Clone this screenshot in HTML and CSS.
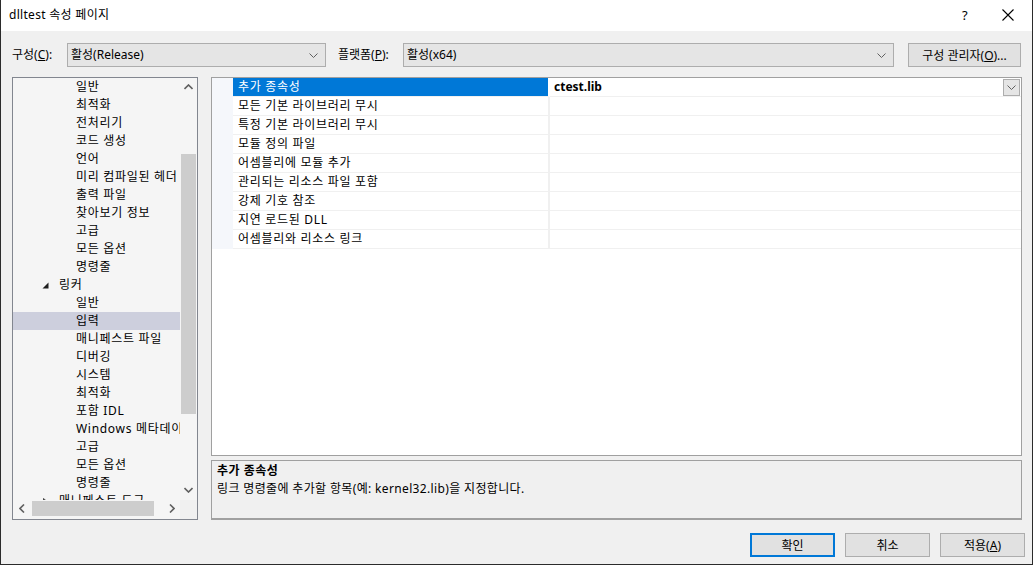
FILE: index.html
```html
<!DOCTYPE html>
<html lang="ko">

<head>
    <meta charset="UTF-8">
    <title>dlltest 속성 페이지</title>
    <link rel="stylesheet" href="styles.css">
</head>

<body>
    <div class="window">
        <div class="titlebar">
            <span class="title">dlltest 속성 페이지</span>
            <span class="help">?</span>
            <span class="close">
                <svg width="12" height="12" viewBox="0 0 12 12">
                    <path d="M0.5 0.5 L11.5 11.5 M11.5 0.5 L0.5 11.5" stroke="#000" stroke-width="1.1" fill="none" />
                </svg>
            </span>
        </div>

        <div class="content">
            <div class="toolbar">
                <span class="label label-config">구성(<u>C</u>):</span>
                <div class="combo combo-config">
                    <span>활성(Release)</span>
                    <svg class="chevron" width="9" height="5" viewBox="0 0 9 5"><path d="M0.5 0.5 L4.5 4.5 L8.5 0.5" stroke="#606060" fill="none" /></svg>
                </div>
                <span class="label label-platform">플랫폼(<u>P</u>):</span>
                <div class="combo combo-platform">
                    <span>활성(x64)</span>
                    <svg class="chevron" width="9" height="5" viewBox="0 0 9 5"><path d="M0.5 0.5 L4.5 4.5 L8.5 0.5" stroke="#606060" fill="none" /></svg>
                </div>
                <button class="btn btn-manager">구성 관리자(<u>O</u>)...</button>
            </div>

            <div class="main">
                <div class="tree">
                    <div class="tree-items">
                        <div class="node child">일반</div>
                        <div class="node child">최적화</div>
                        <div class="node child">전처리기</div>
                        <div class="node child">코드 생성</div>
                        <div class="node child">언어</div>
                        <div class="node child">미리 컴파일된 헤더</div>
                        <div class="node child">출력 파일</div>
                        <div class="node child">찾아보기 정보</div>
                        <div class="node child">고급</div>
                        <div class="node child">모든 옵션</div>
                        <div class="node child">명령줄</div>
                        <div class="node parent">
                            <svg class="expander" width="7" height="7" viewBox="0 0 7 7"><path d="M6.5 0.5 L6.5 6.5 L0.5 6.5 Z" fill="#1e1e1e" /></svg>
                            링커
                        </div>
                        <div class="node child">일반</div>
                        <div class="node child selected">입력</div>
                        <div class="node child">매니페스트 파일</div>
                        <div class="node child">디버깅</div>
                        <div class="node child">시스템</div>
                        <div class="node child">최적화</div>
                        <div class="node child">포함 IDL</div>
                        <div class="node child">Windows 메타데이터</div>
                        <div class="node child">고급</div>
                        <div class="node child">모든 옵션</div>
                        <div class="node child">명령줄</div>
                        <div class="node parent">
                            <svg class="expander" width="7" height="7" viewBox="0 0 7 7"><path d="M1.5 0.5 L5 3.5 L1.5 6.5 Z" fill="none" stroke="#444" /></svg>
                            매니페스트 도구
                        </div>
                    </div>
                    <div class="vscroll">
                        <svg width="9" height="6" viewBox="0 0 9 6"><path d="M0.5 5 L4.5 1 L8.5 5" stroke="#606060" stroke-width="1.6" fill="none" /></svg>
                        <div class="vtrack">
                            <div class="vthumb"></div>
                        </div>
                        <svg width="9" height="6" viewBox="0 0 9 6"><path d="M0.5 1 L4.5 5 L8.5 1" stroke="#606060" stroke-width="1.6" fill="none" /></svg>
                    </div>
                    <div class="hscroll">
                        <svg width="6" height="9" viewBox="0 0 6 9"><path d="M5 0.5 L1 4.5 L5 8.5" stroke="#606060" stroke-width="1.6" fill="none" /></svg>
                        <div class="htrack">
                            <div class="hthumb"></div>
                        </div>
                        <svg width="6" height="9" viewBox="0 0 6 9"><path d="M1 0.5 L5 4.5 L1 8.5" stroke="#606060" stroke-width="1.6" fill="none" /></svg>
                    </div>
                    <div class="corner"></div>
                </div>

                <div class="right-pane">
                    <div class="grid">
                        <div class="prop-row">
                            <div class="gutter"></div>
                            <div class="prop-name selected">추가 종속성</div>
                            <div class="prop-value">
                                <b>ctest.lib</b>
                                <span class="value-drop">
                                    <svg width="9" height="5" viewBox="0 0 9 5"><path d="M0.5 0.5 L4.5 4.5 L8.5 0.5" stroke="#606060" fill="none" /></svg>
                                </span>
                            </div>
                        </div>
                        <div class="prop-row">
                            <div class="gutter"></div>
                            <div class="prop-name">모든 기본 라이브러리 무시</div>
                            <div class="prop-value"></div>
                        </div>
                        <div class="prop-row">
                            <div class="gutter"></div>
                            <div class="prop-name">특정 기본 라이브러리 무시</div>
                            <div class="prop-value"></div>
                        </div>
                        <div class="prop-row">
                            <div class="gutter"></div>
                            <div class="prop-name">모듈 정의 파일</div>
                            <div class="prop-value"></div>
                        </div>
                        <div class="prop-row">
                            <div class="gutter"></div>
                            <div class="prop-name">어셈블리에 모듈 추가</div>
                            <div class="prop-value"></div>
                        </div>
                        <div class="prop-row">
                            <div class="gutter"></div>
                            <div class="prop-name">관리되는 리소스 파일 포함</div>
                            <div class="prop-value"></div>
                        </div>
                        <div class="prop-row">
                            <div class="gutter"></div>
                            <div class="prop-name">강제 기호 참조</div>
                            <div class="prop-value"></div>
                        </div>
                        <div class="prop-row">
                            <div class="gutter"></div>
                            <div class="prop-name">지연 로드된 DLL</div>
                            <div class="prop-value"></div>
                        </div>
                        <div class="prop-row">
                            <div class="gutter"></div>
                            <div class="prop-name">어셈블리와 리소스 링크</div>
                            <div class="prop-value"></div>
                        </div>
                    </div>

                    <div class="desc">
                        <div class="desc-title">추가 종속성</div>
                        <div class="desc-text">링크 명령줄에 추가할 항목(예: kernel32.lib)을 지정합니다.</div>
                    </div>
                </div>
            </div>

            <div class="buttons">
                <button class="btn btn-dialog btn-default">확인</button>
                <button class="btn btn-dialog">취소</button>
                <button class="btn btn-dialog">적용(<u>A</u>)</button>
            </div>
        </div>
    </div>
</body>

</html>
```

FILE: styles.css
```css
html,
body {
    margin: 0;
    padding: 0;
}

body {
    font-family: "Segoe UI", "Noto Sans", "Noto Sans CJK KR", sans-serif;
    font-size: 12px;
    color: #000;
    background-color: #fff;
}

.window {
    width: 1033px;
    height: 565px;
    box-sizing: border-box;
    border: 1px solid #2b2b2b;
    border-top: none;
    display: flex;
    flex-direction: column;
    background-color: #f0f0f0;
}

/* title bar */

.titlebar {
    height: 31px;
    flex-shrink: 0;
    display: flex;
    align-items: center;
    background-color: #fff;
    padding-left: 8px;
}

.title {
    flex: 1;
    line-height: 16px;
    padding-bottom: 1px;
    letter-spacing: 0.3px;
}

.help {
    width: 12px;
    margin-right: 28px;
    font-size: 13px;
    line-height: 16px;
    padding-bottom: 1px;
}

.close {
    display: flex;
    margin-right: 18px;
    padding-bottom: 2px;
}

/* dialog content */

.content {
    flex: 1;
    display: flex;
    flex-direction: column;
    padding: 12px 10px 0 11px;
}

.toolbar {
    display: flex;
    align-items: center;
    height: 24px;
}

.label {
    line-height: 16px;
}

.label-config {
    width: 55px;
}

.label-platform {
    width: 65px;
    margin-left: 12px;
}

.combo {
    box-sizing: border-box;
    height: 24px;
    border: 1px solid #adadad;
    background-color: #e5e5e5;
    display: flex;
    align-items: center;
    padding: 0 7px 0 3px;
}

.combo span {
    flex: 1;
    line-height: 16px;
}

.combo-config {
    width: 259px;
}

.combo-platform {
    width: 491px;
}

.btn {
    font-family: inherit;
    font-size: 12px;
    color: #000;
    background-color: #e1e1e1;
    border: 1px solid #adadad;
    padding: 0;
    box-sizing: border-box;
}

.btn-manager {
    width: 113px;
    height: 24px;
    margin-left: 14px;
}

/* main area */

.main {
    display: flex;
    gap: 13px;
    margin-top: 10px;
    height: 443px;
}

.tree {
    width: 186px;
    box-sizing: border-box;
    border: 1px solid #82868f;
    background-color: #f5f5f5;
    display: grid;
    grid-template-columns: 1fr 17px;
    grid-template-rows: 1fr 19px;
    overflow: hidden;
}

.tree-items {
    overflow: hidden;
    min-height: 0;
}

.node {
    height: 18px;
    line-height: 18px;
    white-space: nowrap;
    display: flex;
    align-items: center;
    letter-spacing: 0.7px;
}

.node.child {
    padding-left: 63px;
}

.node.parent {
    padding-left: 29px;
}

.expander {
    margin-right: 10px;
}

.node.selected {
    background-color: #cdcfdd;
}

.vscroll {
    display: flex;
    flex-direction: column;
    align-items: center;
    padding-top: 6px;
    padding-bottom: 7px;
}

.vtrack {
    flex: 1;
    width: 15px;
    padding-top: 61px;
    padding-bottom: 70px;
    display: flex;
    box-sizing: border-box;
    margin: 3px 0;
}

.vthumb {
    flex: 1;
    background-color: #cdcdcd;
}

.hscroll {
    display: flex;
    align-items: center;
    padding: 0 5px 2px 6px;
}

.htrack {
    flex: 1;
    height: 15px;
    display: flex;
    margin: 0 4px;
    padding-left: 3px;
    padding-right: 10px;
}

.hthumb {
    width: 122px;
    background-color: #cdcdcd;
}

.corner {
    background-color: #f0f0f0;
}

/* property grid */

.right-pane {
    flex: 1;
    display: flex;
    flex-direction: column;
    gap: 4px;
}

.grid {
    height: 379px;
    box-sizing: border-box;
    border: 1px solid #a0a0a0;
    background-color: #fff;
}

.prop-row {
    display: grid;
    grid-template-columns: 21px 317px 1fr;
    height: 19px;
}

.gutter {
    background-color: #f5f7fb;
}

.prop-name,
.prop-value {
    box-sizing: border-box;
    border-bottom: 1px solid #f0f0f0;
    line-height: 18px;
    padding-left: 5px;
    white-space: nowrap;
}

.prop-name {
    border-right: 2px solid #f0f0f0;
    letter-spacing: 0.7px;
}

.prop-name.selected {
    background-color: #0078d7;
    color: #fff;
    border-right-color: #fff;
}

.prop-value {
    display: flex;
    align-items: center;
    padding-left: 4px;
}

.prop-value b {
    flex: 1;
    font-weight: bold;
}

.value-drop {
    width: 17px;
    height: 17px;
    box-sizing: border-box;
    border: 1px solid #adadad;
    background-color: #e5e5e5;
    display: flex;
    align-items: center;
    justify-content: center;
    margin-right: 1px;
}

.desc {
    height: 60px;
    box-sizing: border-box;
    border: 1px solid #a0a0a0;
    border-bottom-width: 2px;
    padding: 1px 5px;
    background-color: #f0f0f0;
}

.desc-title {
    font-weight: bold;
    line-height: 18px;
    letter-spacing: 0.5px;
}

.desc-text {
    line-height: 18px;
    letter-spacing: 0.35px;
}

/* dialog buttons */

.buttons {
    display: flex;
    justify-content: flex-end;
    gap: 10px;
    margin-top: 13px;
    margin-right: -3px;
}

.btn-dialog {
    width: 85px;
    height: 24px;
}

.btn-default {
    border: 2px solid #0078d7;
}
```
